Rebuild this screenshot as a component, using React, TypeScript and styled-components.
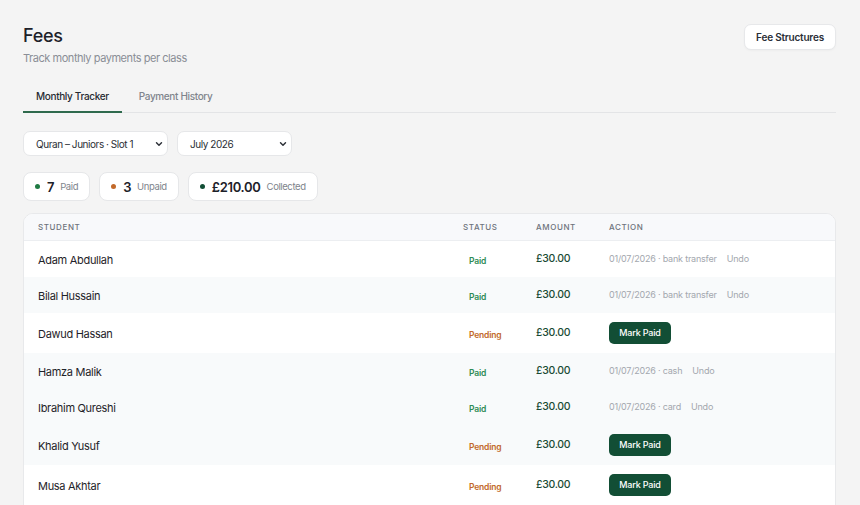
import React from "react";
import styled, { createGlobalStyle } from "styled-components";

const Global = createGlobalStyle`
  * { box-sizing: border-box; }
  html, body { margin: 0; padding: 0; background: #f4f4f4; }
  body { font-family: Inter, "Noto Sans", sans-serif; color: #1f2329; -webkit-font-smoothing: antialiased; }
`;

const Page = styled.div`
  padding: 25px 24px 0 23px;
  height: 505px;
  overflow: hidden;
`;

const Header = styled.div`
  display: flex;
  justify-content: space-between;
  align-items: flex-start;
`;

const TitleBlock = styled.div`
  display: flex;
  flex-direction: column;
`;

const Title = styled.h1`
  margin: 0;
  font-size: 18px;
  font-weight: 500;
  line-height: 22px;
  letter-spacing: -0.3px;
  color: #1d2129;
`;

const Subtitle = styled.p`
  margin: 3px 0 0;
  font-size: 11px;
  line-height: 16px;
  color: #8a8e96;
  letter-spacing: -0.45px;
`;

const GhostButton = styled.button`
  font-family: inherit;
  background: #ffffff;
  border: 1px solid #e7e8ea;
  border-radius: 7px;
  height: 26px;
  width: 92px;
  margin-top: -1px;
  font-size: 10px;
  font-weight: 600;
  color: #2a2e36;
  letter-spacing: -0.2px;
  box-shadow: 0 1px 2px rgba(0,0,0,0.03);
`;

const Tabs = styled.div`
  display: flex;
  margin-top: 22px;
  border-bottom: 1px solid #e3e4e6;
`;

const Tab = styled.div<{ $active?: boolean }>`
  padding: 2px 13px 0;
  height: 25px;
  display: flex;
  align-items: flex-start;
  font-size: 10px;
  font-weight: 500;
  color: ${p => (p.$active ? "#262a31" : "#80848c")};
  border-bottom: 2px solid ${p => (p.$active ? "#2f6a4d" : "transparent")};
  margin-bottom: -1px;
  margin-right: 4px;
  letter-spacing: -0.35px;
`;

const Filters = styled.div`
  display: flex;
  gap: 9px;
  margin-top: 18px;
`;

const SelectBox = styled.div<{ $w: number }>`
  width: ${p => p.$w}px;
  height: 25px;
  background: #ffffff;
  border: 1px solid #e6e7e9;
  border-radius: 7px;
  display: flex;
  align-items: center;
  justify-content: space-between;
  padding: 0 3px 0 12px;
  font-size: 10px;
  color: #2b2f36;
  letter-spacing: -0.45px;
`;

const Stats = styled.div`
  display: flex;
  gap: 9px;
  margin-top: 16px;
`;

const Chip = styled.div`
  height: 29px;
  background: #ffffff;
  border: 1px solid #e6e7e9;
  border-radius: 8px;
  display: flex;
  align-items: center;
  padding: 0 11px;
`;

const Dot = styled.span<{ $c: string }>`
  width: 5px;
  height: 5px;
  border-radius: 50%;
  background: ${p => p.$c};
  margin-right: 7px;
`;

const ChipNum = styled.span`
  font-size: 13px;
  font-weight: 600;
  color: #1d2129;
  margin-right: 6px;
  letter-spacing: -0.3px;
`;

const ChipLabel = styled.span`
  font-size: 9.5px;
  color: #80848c;
  letter-spacing: -0.4px;
`;

const Table = styled.div`
  margin-top: 12px;
  background: #ffffff;
  border: 1px solid #e8e9eb;
  border-radius: 10px 10px 0 0;
  overflow: hidden;
`;

const cols = "425px 73px 73px 1fr";

const HeadRow = styled.div`
  display: grid;
  grid-template-columns: ${cols};
  height: 27px;
  align-items: center;
  background: #f8f9fb;
  border-bottom: 1px solid #eceef1;
`;

const HeadCell = styled.div`
  padding-left: 14px;
  font-size: 8px;
  font-weight: 500;
  letter-spacing: 0.6px;
  text-transform: uppercase;
  color: #6e737b;
`;

const Row = styled.div<{ $alt?: boolean; $tall?: boolean }>`
  display: grid;
  grid-template-columns: ${cols};
  height: ${p => (p.$tall ? 40 : 36)}px;
  align-items: center;
  background: ${p => (p.$alt ? "#f8fafb" : "#ffffff")};
`;

const NameCell = styled.div`
  padding-left: 14px;
  padding-top: 1px;
  font-size: 11px;
  color: #1f2329;
  letter-spacing: -0.3px;
`;

const StatusCell = styled.div`
  padding-left: 14px;
  display: flex;
  align-items: center;
  margin-top: 3px;
`;

const Badge = styled.span<{ $paid: boolean }>`
  padding: 0 6px;
  font-size: 8.5px;
  line-height: 12px;
  font-weight: 600;
  letter-spacing: -0.2px;
  color: ${p => (p.$paid ? "#2e8b55" : "#c2692a")};
`;

const AmountCell = styled.div`
  padding-left: 14px;
  font-size: 10.5px;
  font-weight: 500;
  color: #1a4a34;
  letter-spacing: -0.3px;
  margin-top: -1px;
`;

const ActionCell = styled.div`
  padding-left: 14px;
  display: flex;
  align-items: center;
  gap: 10px;
  font-size: 9px;
  color: #a3a7ae;
  letter-spacing: -0.2px;
  margin-top: -1px;
`;

const MarkButton = styled.button`
  font-family: inherit;
  height: 22px;
  width: 62px;
  border: none;
  border-radius: 5px;
  background: #124e35;
  color: #ffffff;
  font-size: 9px;
  font-weight: 500;
  letter-spacing: -0.2px;
`;

const Chevron = () => (
  <svg width="10" height="10" viewBox="0 0 24 24" fill="none" stroke="#2b2f36" strokeWidth="3.4" strokeLinecap="round" strokeLinejoin="round">
    <path d="M6 9l6 6 6-6" />
  </svg>
);

type Student = { name: string; paid: boolean; method?: string; alt?: boolean };

const students: Student[] = [
  { name: "Adam Abdullah", paid: true, method: "bank transfer" },
  { name: "Bilal Hussain", paid: true, method: "bank transfer", alt: true },
  { name: "Dawud Hassan", paid: false },
  { name: "Hamza Malik", paid: true, method: "cash", alt: true },
  { name: "Ibrahim Qureshi", paid: true, method: "card", alt: true },
  { name: "Khalid Yusuf", paid: false, alt: true },
  { name: "Musa Akhtar", paid: false },
];

export default function App() {
  return (
    <>
      <Global />
      <Page>
        <Header>
          <TitleBlock>
            <Title>Fees</Title>
            <Subtitle>Track monthly payments per class</Subtitle>
          </TitleBlock>
          <GhostButton>Fee Structures</GhostButton>
        </Header>
        <Tabs>
          <Tab $active>Monthly Tracker</Tab>
          <Tab>Payment History</Tab>
        </Tabs>
        <Filters>
          <SelectBox $w={145}>
            <span>Quran – Juniors · Slot 1</span>
            <Chevron />
          </SelectBox>
          <SelectBox $w={115}>
            <span>July 2026</span>
            <Chevron />
          </SelectBox>
        </Filters>
        <Stats>
          <Chip>
            <Dot $c="#1f7a43" />
            <ChipNum>7</ChipNum>
            <ChipLabel>Paid</ChipLabel>
          </Chip>
          <Chip>
            <Dot $c="#c2692a" />
            <ChipNum>3</ChipNum>
            <ChipLabel>Unpaid</ChipLabel>
          </Chip>
          <Chip>
            <Dot $c="#124e35" />
            <ChipNum>£210.00</ChipNum>
            <ChipLabel>Collected</ChipLabel>
          </Chip>
        </Stats>
        <Table>
          <HeadRow>
            <HeadCell>Student</HeadCell>
            <HeadCell>Status</HeadCell>
            <HeadCell>Amount</HeadCell>
            <HeadCell>Action</HeadCell>
          </HeadRow>
          {students.map(s => (
            <Row key={s.name} $alt={s.alt} $tall={!s.paid}>
              <NameCell>{s.name}</NameCell>
              <StatusCell>
                <Badge $paid={s.paid}>{s.paid ? "Paid" : "Pending"}</Badge>
              </StatusCell>
              <AmountCell>£30.00</AmountCell>
              <ActionCell>
                {s.paid ? (
                  <>
                    <span>01/07/2026 · {s.method}</span>
                    <span>Undo</span>
                  </>
                ) : (
                  <MarkButton>Mark Paid</MarkButton>
                )}
              </ActionCell>
            </Row>
          ))}
        </Table>
      </Page>
    </>
  );
}
